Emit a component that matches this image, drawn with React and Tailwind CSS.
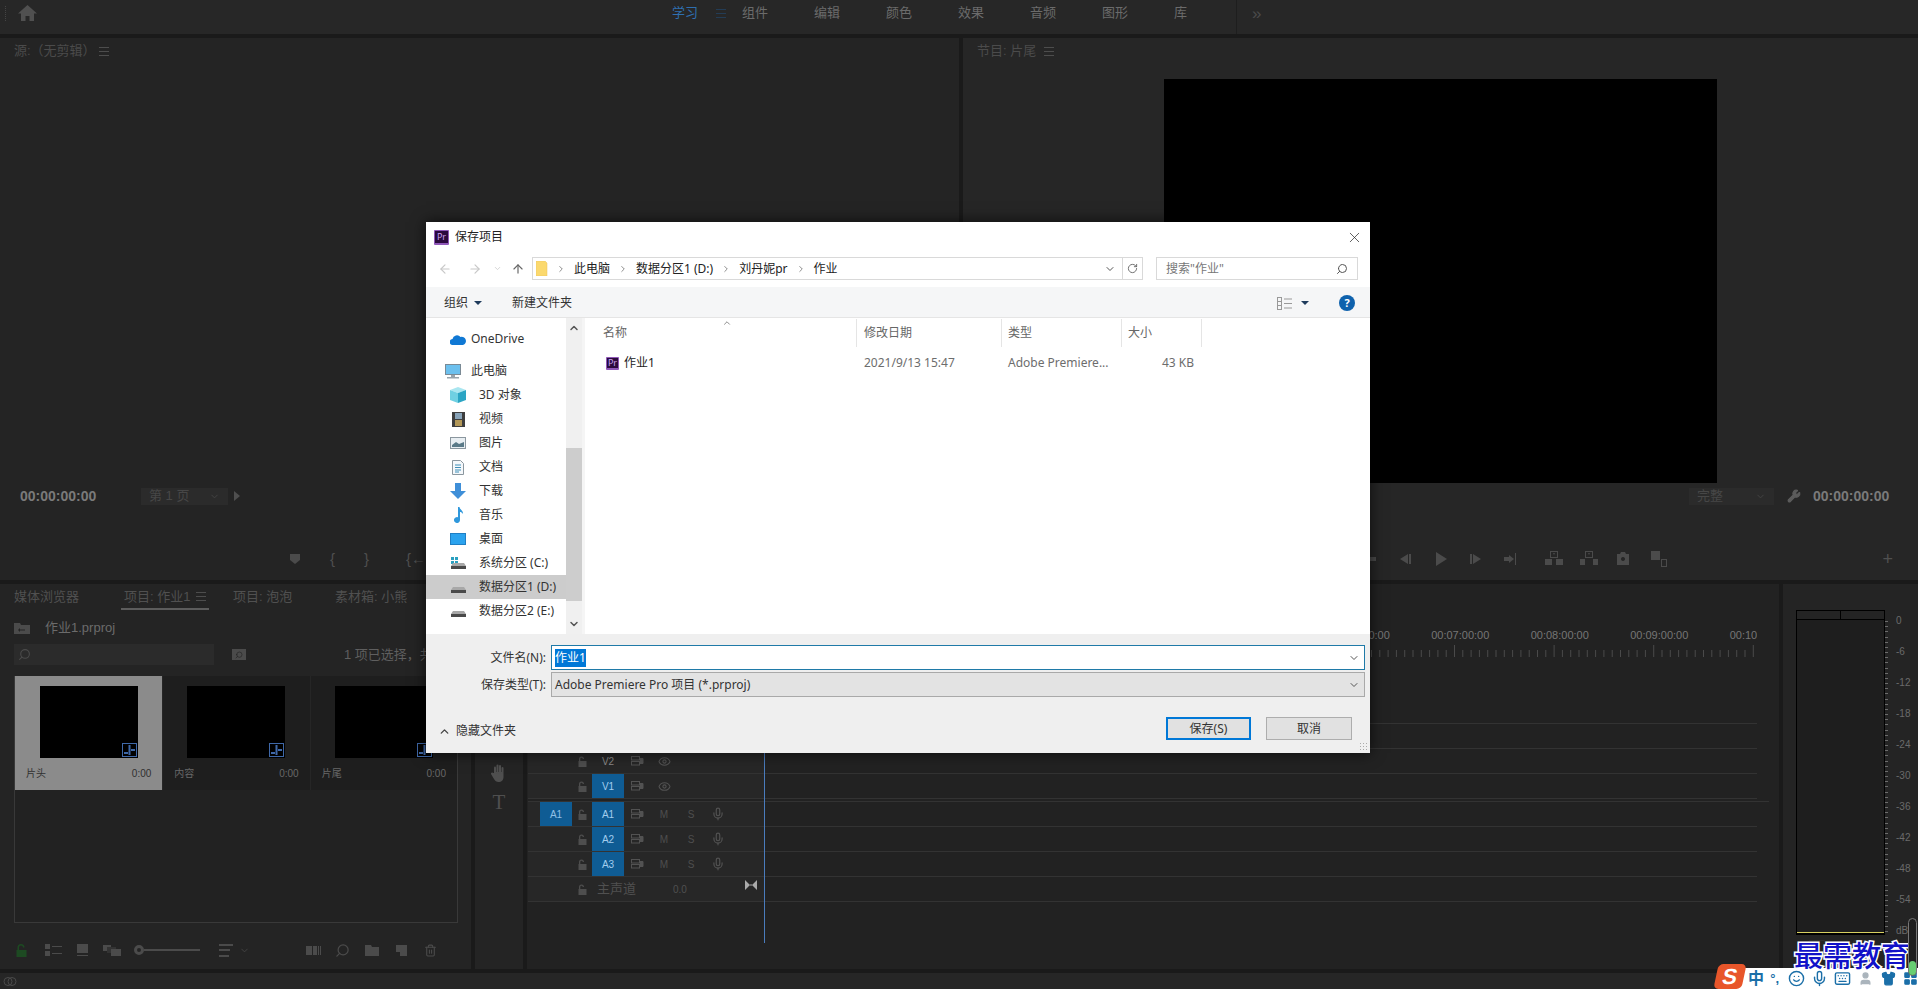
import {
  ArrowLeft,
  ArrowRight,
  ArrowUp,
  ChevronDown,
  ChevronRight,
  ChevronUp,
  Eye,
  Keyboard,
  LayoutGrid,
  Mic,
  RotateCw,
  Search,
  Shirt,
  Smile,
  Trash2,
  User,
  Wrench,
  X,
} from "lucide-react";

const G = "#4b4b4b";

function MenuIcon({ color = "#4d4d4d" }) {
  return (
    <svg width="10" height="9" viewBox="0 0 10 9" fill={color}>
      <rect y="0" width="10" height="1" />
      <rect y="4" width="10" height="1" />
      <rect y="8" width="10" height="1" />
    </svg>
  );
}

function Icon({ w = 16, h = 16, children, fill = G }) {
  return (
    <svg width={w} height={h} viewBox={`0 0 ${w} ${h}`} fill={fill} className="shrink-0">
      {children}
    </svg>
  );
}

function LockIcon() {
  return (
    <Icon w={9} h={11} fill="#4e4e4e">
      <path d="M1 5V3a2.5 2.5 0 0 1 5 0h-1.3a1.2 1.2 0 0 0-2.4 0v2H8.5v6H.5V5z" />
    </Icon>
  );
}

function SyncIcon() {
  return (
    <svg width="13" height="10" viewBox="0 0 13 10" fill="none" stroke="#525252">
      <rect x=".5" y=".5" width="8" height="3.5" />
      <rect x=".5" y="5.5" width="8" height="3.5" />
      <path d="M9 2.5h3v5H9" fill="#525252" />
    </svg>
  );
}

function PrBadge({ size = 15 }) {
  return (
    <div
      className="flex shrink-0 items-center justify-center rounded-[1px] border border-b-2 border-[#8f57b8] bg-[#2b0a3d] text-[9px] leading-none text-[#c9a2ee]"
      style={{ width: size, height: size }}
    >
      Pr
    </div>
  );
}

function Thumb({ name, selected }) {
  return (
    <div className={selected ? "h-[114px] w-[148px] bg-[#8b8b8b] pt-[10px]" : "h-[114px] w-[148px] border-l border-[#262626] bg-[#1e1e1e] pt-[10px]"}>
      <div className="relative mx-auto h-[72px] w-[98px] bg-black">
        <div className="absolute right-[1px] bottom-[1px] flex h-[14px] w-[15px] items-center justify-center border border-[#3f68a8]">
          <svg width="11" height="10" viewBox="0 0 11 10" fill="#3f68a8">
            <rect x="4.5" y="0" width="2" height="10" />
            <rect x="0" y="7" width="4" height="2" />
            <rect x="7" y="4" width="4" height="2" />
          </svg>
        </div>
      </div>
      <div className={selected ? "mt-2 flex items-center justify-between px-[11px] text-[10px] leading-4 text-[#303030]" : "mt-2 flex items-center justify-between px-[11px] text-[10px] leading-4 text-[#686868]"}>
        <span>{name}</span>
        <span>0:00</span>
      </div>
    </div>
  );
}

function ProjectPanel() {
  return (
    <div className="w-[471px] overflow-hidden bg-[#242424] text-[13px] text-[#505050]">
      <div className="flex h-[26px] items-center whitespace-nowrap pl-[14px]">
        <span className="w-[107px]">媒体浏览器</span>
        <div className="flex h-[26px] w-[88px] items-center gap-[6px] border-b-2 border-[#5c5c5c] pl-[3px] pt-[1px]">
          <span>项目: 作业1</span>
          <MenuIcon />
        </div>
        <span className="ml-[24px] w-[102px]">项目: 泡泡</span>
        <span>素材箱: 小熊</span>
      </div>
      <div className="mt-2 flex h-5 items-center pl-[14px]">
        <Icon w={16} h={11}>
          <path d="M0 0h6l1 2h9v9H0z" />
          <path d="M4 7l2-2v1.500h5v1H6V9z" fill="#242424" />
        </Icon>
        <span className="ml-[15px] text-[#6b6b6b]">作业1.prproj</span>
      </div>
      <div className="mt-[6px] flex h-[21px] items-center pl-[14px]">
        <div className="flex h-[21px] w-[200px] items-center bg-[#2b2b2b] pl-1">
          <Search size={13} color="#4b4b4b" className="-scale-x-100" />
        </div>
        <div className="ml-[18px] flex h-[11px] w-[14px] items-center justify-center bg-[#4b4b4b]">
          <Search size={8} color="#242424" className="-scale-x-100" />
        </div>
        <span className="ml-[98px] whitespace-nowrap text-[#5f5f5f]">1 项已选择，共 3 项</span>
      </div>
      <div className="mx-[14px] mt-[11px] h-[247px] w-[444px] border border-t-0 border-[#393939] bg-[#222]">
        <div className="flex">
          <Thumb name="片头" selected />
          <Thumb name="内容" />
          <Thumb name="片尾" />
        </div>
      </div>
      <div className="mt-[17px] flex h-5 items-center pl-[16px]">
        <Icon w={11} h={13} fill="#1d4a22">
          <path d="M1.5 6V3.5a3.5 3.5 0 0 1 7 0H7a2 2 0 0 0-4 0V6h7.5v7H.5V6z" />
        </Icon>
        <div className="ml-[18px]">
          <Icon w={17} h={12}>
            <rect width="5" height="5" />
            <rect y="7" width="5" height="5" />
            <rect x="7" y="2" width="10" height="1" />
            <rect x="7" y="9" width="10" height="1" />
          </Icon>
        </div>
        <div className="ml-[15px]">
          <Icon w={11} h={12}>
            <rect width="11" height="9" />
            <rect y="11" width="11" height="1" />
          </Icon>
        </div>
        <div className="ml-[15px]">
          <Icon w={18} h={11}>
            <rect width="8" height="6" />
            <rect x="4" y="2" width="9" height="6" fill="#333" />
            <rect x="8" y="4" width="10" height="7" />
          </Icon>
        </div>
        <div className="ml-[13px] h-[10px] w-[10px] rounded-full border-[3px] border-[#4b4b4b]" />
        <div className="h-[2px] w-[56px] bg-[#4b4b4b]" />
        <div className="ml-[19px]">
          <Icon w={14} h={13}>
            <rect width="14" height="2" />
            <rect y="5" width="11" height="2" />
            <rect y="11" width="10" height="2" />
          </Icon>
        </div>
        <ChevronDown size={11} color="#444" className="ml-[6px]" />
        <div className="ml-[56px]">
          <Icon w={15} h={9}>
            <rect width="6" height="9" />
            <rect x="7" width="4" height="9" />
            <rect x="12" width="1" height="9" />
            <rect x="14" width="1" height="9" />
          </Icon>
        </div>
        <Search size={15} color="#4b4b4b" className="ml-[14px] -scale-x-100" />
        <div className="ml-[15px]">
          <Icon w={14} h={11}>
            <path d="M0 0h6l1 2h7v9H0z" />
          </Icon>
        </div>
        <div className="ml-[17px]">
          <Icon w={11} h={11}>
            <path d="M0 0h11v11H4V7H0z" />
          </Icon>
        </div>
        <Trash2 size={13} color="#4b4b4b" className="ml-[17px]" />
      </div>
    </div>
  );
}

function Row({ label, on, patch, audio, eye }) {
  return (
    <div className="flex h-[25px] w-[1229px] border-b border-[#333]">
      <div className="flex w-[236px] items-center bg-[#272727] pl-[12px] text-[10px]">
        <div className={patch ? "flex h-[24px] w-[32px] items-center justify-center bg-[#0f5c94] text-[#8fc0e6]" : "w-[32px]"}>{patch ? "A1" : ""}</div>
        <div className="flex w-[20px] justify-center">
          <LockIcon />
        </div>
        <div className={on ? "flex h-[24px] w-[32px] items-center justify-center bg-[#0f5c94] text-[#a2cdee]" : "flex h-[24px] w-[32px] items-center justify-center text-[#8a8a8a]"}>{label}</div>
        <div className="flex w-[26px] justify-center">
          <SyncIcon />
        </div>
        {eye ? (
          <div className="flex w-[28px] justify-center">
            <Eye size={13} color="#525252" />
          </div>
        ) : null}
        {audio ? (
          <>
            <div className="w-[28px] text-center text-[#4e4e4e]">M</div>
            <div className="w-[26px] text-center text-[#4e4e4e]">S</div>
            <div className="flex w-[28px] justify-center">
              <Mic size={14} color="#525252" />
            </div>
          </>
        ) : null}
      </div>
    </div>
  );
}

function Ruler() {
  const ticks = [];
  for (let i = 0; i < 47; i++) {
    ticks.push(<rect key={i} x={i * 8.3} y={i % 12 === 10 ? 0 : 5} width="1" height={i % 12 === 10 ? 12 : 7} fill="#4a4a4a" />);
  }
  return (
    <div className="ml-px h-[30px] w-[1229px] overflow-hidden">
      <div className="flex pl-[783px] text-[11px] leading-[14px] text-[#767676]">
        {["00:06:00:00", "00:07:00:00", "00:08:00:00", "00:09:00:00", "00:10:00:00"].map((t) => (
          <span key={t} className="w-[99.5px] shrink-0 text-center">
            {t}
          </span>
        ))}
      </div>
      <svg width="386" height="14" className="ml-[843px] mt-[3px]">
        {ticks}
      </svg>
    </div>
  );
}

function TimelinePanel() {
  return (
    <div className="relative flex-1 bg-[#222] pt-[44px]">
      <Ruler />
      <div className="ml-px mt-[41px]">
        <Row label="V4" eye />
        <Row label="V3" eye />
        <Row label="V2" eye />
        <Row label="V1" on eye />
        <div className="h-[3px] w-[1241px] border-b border-[#333]" />
        <Row label="A1" on patch audio />
        <Row label="A2" on audio />
        <Row label="A3" on audio />
        <div className="flex h-[25px] w-[1229px] border-b border-[#333]">
          <div className="flex w-[236px] items-center bg-[#272727] pl-[50px] text-[#505050]">
            <LockIcon />
            <span className="ml-[10px] text-[13px]">主声道</span>
            <span className="ml-[37px] text-[10px]">0.0</span>
            <div className="ml-[58px] -mt-[8px]">
              <svg width="12" height="10" viewBox="0 0 12 10" fill="#aaa">
                <path d="M0 0l5 5-5 5zM12 0L7 5l5 5zM5 4.5h2v1H5z" />
              </svg>
            </div>
          </div>
        </div>
      </div>
      <div className="absolute top-[60px] left-[237px] h-[299px] w-px bg-[#4a7cbd]" />
    </div>
  );
}

function MeterPanel() {
  return (
    <div className="w-[135px] bg-[#242424] pl-[13px] pt-[26px]">
      <div className="flex h-[327px] items-start text-[10px] leading-3 text-[#6b6b6b]">
        <div className="flex h-[325px] w-[89px] flex-col border-x border-b-2 border-t border-black bg-[#1e1e1e]">
          <div className="flex h-[9px] border-b border-black bg-[#242424]">
            <div className="w-1/2 border-r border-black" />
          </div>
          <div className="mt-auto h-px bg-[#d8d060]" />
        </div>
        <div className="mt-[11px] h-[312px] w-[3px] bg-[repeating-linear-gradient(to_bottom,#6c6c6c_0,#6c6c6c_1px,transparent_1px,transparent_5.17px)]" />
        <div className="flex h-[327px] flex-col justify-between pl-[8px] pt-[5px]">
          {["0", "-6", "-12", "-18", "-24", "-30", "-36", "-42", "-48", "-54", "dB"].map((t) => (
            <span key={t}>{t}</span>
          ))}
        </div>
      </div>
      <div className="mt-[3px] flex gap-[27px] pl-[12px]">
        <div className="h-5 w-[18px] rounded-[2px] border border-[#303030]" />
        <div className="h-5 w-[18px] rounded-[2px] border border-[#303030]" />
      </div>
    </div>
  );
}

function TopBar() {
  return (
    <div className="flex h-[34px] items-center bg-[#272727] pb-[8px] text-[13px] text-[#6b6b6b]">
      <div className="ml-[5px] h-[15px] w-px border-l border-dotted border-[#444]" />
      <div className="ml-[12px]">
        <Icon w={19} h={16} fill="#505050">
          <path d="M9.5 0L19 8.500h-3V16h-4.500v-5h-4v5H3V8.500H0z" />
        </Icon>
      </div>
      <span className="ml-[635px] w-[44px] text-[#2f6fb0]">学习</span>
      <MenuIcon color="#233c55" />
      <div className="ml-[16px] flex">
        {["组件", "编辑", "颜色", "效果", "音频", "图形"].map((t) => (
          <span key={t} className="w-[72px]">
            {t}
          </span>
        ))}
        <span className="w-[62px]">库</span>
      </div>
      <div className="-mb-[8px] h-[34px] border-l border-[#1e1e1e]" />
      <span className="ml-[15px] text-[17px] leading-none text-[#4b4b4b]">»</span>
    </div>
  );
}

function SourcePanel() {
  return (
    <div className="flex w-[959px] flex-col bg-[#242424] pb-[11px] pl-[14px] pt-[5px] text-[13px] text-[#4b4b4b]">
      <div className="flex h-4 items-center gap-[3px]">
        <span>源:（无剪辑）</span>
        <MenuIcon />
      </div>
      <div className="mt-auto flex h-5 items-center pl-[6px]">
        <span className="w-[121px] text-[14px] font-bold text-[#7a7a7a]">00:00:00:00</span>
        <div className="flex h-[17px] w-[87px] items-center justify-between bg-[#2b2b2b] px-2 text-[#474747]">
          <span>第 1 页</span>
          <ChevronDown size={11} color="#444" />
        </div>
        <div className="ml-[6px] h-0 w-0 border-y-[5px] border-l-[6px] border-y-transparent border-l-[#4f4f4f]" />
      </div>
      <div className="mt-[43px] flex h-5 items-center pl-[276px] text-[15px] text-[#4f4f4f]">
        <Icon w={10} h={10}>
          <path d="M0 0h10v6L5 10 0 6z" />
        </Icon>
        <span className="ml-[30px] w-[34px]">{"{"}</span>
        <span className="w-[42px]">{"}"}</span>
        <span>{"{←"}</span>
      </div>
    </div>
  );
}

function ProgramPanel() {
  const ctl = [
    <path key="a" d="M12 5H6V3L1 7l5 4V9h6z" />,
    <path key="b" d="M1 7l8-5v10zM10 2h2v10h-2z" />,
    <path key="c" d="M2 0l11 7-11 7z" />,
    <path key="d" d="M1 2h2v10H1zM4 2l8 5-8 5z" />,
    <path key="e" d="M0 5h5V3l5 4-5 4V9H0zM11 1h1v12h-1z" />,
  ];
  const ctl2 = [
    <path key="f" fillRule="evenodd" d="M5 0h8v7H5zM6 1v5h6V1zM0 8h7v6H0zM11 8h7v6h-7zM8 2h2l-1 2z" />,
    <path key="g" fillRule="evenodd" d="M5 0h8v7H5zM6 1v5h6V1zM0 8h5v6H0zM13 8h5v6h-5zM8 2h2l-1 2z" />,
    <path key="h" fillRule="evenodd" d="M2 3h3l1-2h4l1 2h3v11H2zM8 6a2 2 0 1 0 .01 0z" />,
    <path key="i" fillRule="evenodd" d="M1 0h9v9H1zM11 8h6v8h-6zM12 9v6h4V9z" />,
  ];
  return (
    <div className="flex flex-1 flex-col bg-[#262626] pb-[11px] pt-[5px] text-[13px] text-[#4b4b4b]">
      <div className="flex h-4 items-center gap-[8px] pl-[14px]">
        <span>节目: 片尾</span>
        <MenuIcon />
      </div>
      <div className="ml-[201px] mt-5 h-[404px] w-[553px] bg-black" />
      <div className="mt-auto flex h-5 items-center justify-end pr-[30px]">
        <div className="flex h-[17px] w-[85px] items-center justify-between bg-[#2b2b2b] px-2 text-[#474747]">
          <span>完整</span>
          <ChevronDown size={11} color="#444" />
        </div>
        <Wrench size={14} color="#5c5c5c" fill="#5c5c5c" className="ml-[13px]" />
        <span className="ml-[12px] w-[75px] text-[14px] font-bold text-[#7a7a7a]">00:00:00:00</span>
      </div>
      <div className="mt-[43px] flex h-5 items-center pl-[390px]">
        {ctl.map((p) => (
          <div key={p.key} className="flex w-[35px] justify-center">
            <Icon w={14} h={14}>{p}</Icon>
          </div>
        ))}
        <div className="ml-[8px] flex">
          {ctl2.map((p) => (
            <div key={p.key} className="flex w-[35px] justify-center">
              <Icon w={18} h={16}>{p}</Icon>
            </div>
          ))}
        </div>
        <span className="ml-auto mr-[25px] text-[18px] leading-none text-[#505050]">+</span>
      </div>
    </div>
  );
}

function NavIcon({ kind }) {
  if (kind === "cloud")
    return (
      <Icon w={16} h={11} fill="#0f78d4">
        <path d="M3 11a3 3 0 0 1-.5-6A4.500 4.500 0 0 1 10.500 3 3.500 3.500 0 0 1 13 11z" />
      </Icon>
    );
  if (kind === "pc")
    return (
      <svg width="16" height="15" viewBox="0 0 16 15" className="shrink-0">
        <rect x=".5" y=".5" width="15" height="10" fill="#6cc0ee" stroke="#7a8a95" />
        <rect x="6" y="11" width="4" height="2" fill="#98a4ac" />
        <rect x="2" y="13" width="12" height="1.500" fill="#98a4ac" />
      </svg>
    );
  if (kind === "cube")
    return (
      <svg width="16" height="16" viewBox="0 0 16 16" className="shrink-0">
        <path d="M8 0l8 3-8 3-8-3z" fill="#a9e6f0" />
        <path d="M0 3l8 3v10l-8-3z" fill="#6fd0e2" />
        <path d="M16 3l-8 3v10l8-3z" fill="#2ba5c4" />
      </svg>
    );
  if (kind === "film")
    return (
      <svg width="13" height="15" viewBox="0 0 13 15" className="shrink-0">
        <rect width="13" height="15" fill="#3e3e3e" />
        <rect x="3" y="1" width="7" height="6" fill="#88a3b8" />
        <rect x="3" y="8" width="7" height="6" fill="#b39858" />
      </svg>
    );
  if (kind === "pic")
    return (
      <svg width="16" height="12" viewBox="0 0 16 12" className="shrink-0">
        <rect x=".5" y=".5" width="15" height="11" fill="#e8eef2" stroke="#8b979f" />
        <path d="M2 8l4-3 3 2 5-2v5H2z" fill="#5a7a88" />
      </svg>
    );
  if (kind === "doc")
    return (
      <svg width="12" height="15" viewBox="0 0 12 15" className="shrink-0">
        <path d="M.5.5h8l3 3v11H.5z" fill="#f5f8fb" stroke="#8b979f" />
        <path d="M3 5h6M3 7.500h6M3 10h6M3 12h4" stroke="#3f8fb8" />
      </svg>
    );
  if (kind === "down")
    return (
      <Icon w={16} h={16} fill="#3f8fd8">
        <path d="M5 0h6v8h5l-8 8-8-8h5z" />
      </Icon>
    );
  if (kind === "note")
    return (
      <Icon w={12} h={16} fill="#2f98dc">
        <path d="M6 0h1.500c.5 3 4 3.500 3.500 7-1-1.500-2-2-3-2v8a3 3 0 1 1-2-2.800z" />
      </Icon>
    );
  if (kind === "desk")
    return (
      <svg width="16" height="12" viewBox="0 0 16 12" className="shrink-0">
        <rect x=".5" y=".5" width="15" height="11" fill="#2ba3ee" stroke="#1f7fc4" />
      </svg>
    );
  return (
    <svg width="15" height="12" viewBox="0 0 15 12" className="shrink-0">
      {kind === "win" ? <path d="M0 0h3v3H0zM4 0h3v3H4zM0 4h3v3H0zM4 4h3v3H4z" fill="#2aa0c0" /> : null}
      <path d="M2 6h11l2 3v3H0V9z" fill="#a8a8a8" />
      <rect y="9" width="15" height="3" fill="#4a4a4a" />
    </svg>
  );
}

const places = [
  ["pc", "此电脑", 0],
  ["cube", "3D 对象", 1],
  ["film", "视频", 1],
  ["pic", "图片", 1],
  ["doc", "文档", 1],
  ["down", "下载", 1],
  ["note", "音乐", 1],
  ["desk", "桌面", 1],
  ["win", "系统分区 (C:)", 1],
  ["drive", "数据分区1 (D:)", 1, true],
  ["drive", "数据分区2 (E:)", 1],
];

function SaveDialog() {
  const crumbs = ["此电脑", "数据分区1 (D:)", "刘丹妮pr", "作业"];
  return (
    <div className="absolute left-[426px] top-[222px] z-10 h-[531px] w-[944px] bg-white text-[12px] text-[#333] shadow-[0_0_14px_rgba(0,0,0,0.7)] font-['Noto_Sans','Noto_Sans_CJK_SC',sans-serif]">
      <div className="flex h-7 items-center pl-2 pr-[7px] pt-[2px]">
        <PrBadge />
        <span className="ml-[6px] text-[#222]">保存项目</span>
        <X size={17} strokeWidth={1} color="#222" className="ml-auto" />
      </div>
      <div className="flex h-[37px] pb-[7px] pt-[7px]">
        <div className="flex w-[106px] items-center pl-[12px]">
          <ArrowLeft size={14} color="#c8c8c8" />
          <ArrowRight size={14} color="#c8c8c8" className="ml-[16px]" />
          <ChevronDown size={9} color="#c8c8c8" className="ml-[11px]" />
          <ArrowUp size={14} color="#666" className="ml-[9px]" />
        </div>
        <div className="flex w-[611px] items-center border border-[#d9d9d9]">
          <svg width="12" height="15" viewBox="0 0 12 15" className="ml-[3px] shrink-0">
            <path d="M0 0h9l2 2v13H0z" fill="#fbd96e" stroke="#e8c35c" strokeWidth=".5" />
          </svg>
          {crumbs.map((c) => (
            <div key={c} className="flex items-center">
              <ChevronRight size={10} color="#777" className="mx-[8px]" />
              <span className="whitespace-nowrap text-[#222]">{c}</span>
            </div>
          ))}
          <ChevronDown size={12} color="#555" className="ml-auto mr-[6px]" />
          <div className="flex h-full w-[20px] items-center justify-center border-l border-[#d9d9d9]">
            <RotateCw size={11} color="#666" />
          </div>
        </div>
        <div className="ml-[13px] flex w-[202px] items-center justify-between border border-[#d9d9d9] px-[9px] text-[#777]">
          <span>搜索"作业"</span>
          <Search size={12} color="#555" className="-scale-x-100" />
        </div>
      </div>
      <div className="flex h-[31px] items-center border-b border-[#e5e5e5] bg-[#f5f6f7] pl-[18px] pr-[15px] pt-[2px]">
        <span>组织</span>
        <div className="ml-[6px] h-0 w-0 border-x-[4px] border-t-[4px] border-x-transparent border-t-[#1e3b5c]" />
        <span className="ml-[30px]">新建文件夹</span>
        <svg width="15" height="13" viewBox="0 0 15 13" fill="none" stroke="#999" className="ml-auto">
          <rect x=".5" y=".5" width="4" height="12" />
          <path d="M0 4.500h4M0 8.500h4M7 2h8M7 6.500h8M7 11h8" />
        </svg>
        <div className="ml-[9px] h-0 w-0 border-x-[4px] border-t-[4px] border-x-transparent border-t-[#1e3b5c]" />
        <div className="ml-[30px] flex h-4 w-4 items-center justify-center rounded-full bg-[#0f62ad] text-[11px] font-bold text-white">?</div>
      </div>
      <div className="flex h-[316px]">
        <div className="w-[140px] pt-[9px]">
          <div className="flex h-6 items-center pl-[24px]">
            <NavIcon kind="cloud" />
            <span className="ml-[5px]">OneDrive</span>
          </div>
          <div className="mt-2">
            {places.map(([kind, name, sub, sel]) => (
              <div key={name} className={sel ? "flex h-6 items-center bg-[#ccc]" : "flex h-6 items-center"}>
                <div className={sub ? "flex w-[53px] justify-center pl-[11px]" : "flex w-[45px] justify-center pl-[8px]"}>
                  <NavIcon kind={kind} />
                </div>
                <span className="whitespace-nowrap">{name}</span>
              </div>
            ))}
          </div>
        </div>
        <div className="flex w-4 flex-col items-center bg-[#f0f0f0] py-1">
          <ChevronUp size={12} strokeWidth={3} color="#555" />
          <div className="mt-[114px] h-[153px] w-full bg-[#cdcdcd]" />
          <ChevronDown size={12} strokeWidth={3} color="#555" className="mt-auto" />
        </div>
        <div className="w-[3px] bg-[#f5f5f5]" />
        <div className="relative flex-1 pt-px">
          <ChevronUp size={10} color="#777" className="absolute left-[137px] top-0" />
          <div className="flex h-7 text-[#666]">
            <div className="flex w-[272px] items-center border-r border-[#e5e5e5] pl-[18px]">名称</div>
            <div className="flex w-[145px] items-center border-r border-[#e5e5e5] pl-[7px]">修改日期</div>
            <div className="flex w-[120px] items-center border-r border-[#e5e5e5] pl-[6px]">类型</div>
            <div className="flex w-[80px] items-center border-r border-[#e5e5e5] pl-[6px]">大小</div>
          </div>
          <div className="mt-1 flex h-6 items-center text-[#6d6d6d]">
            <div className="flex w-[272px] items-center pl-[21px] text-[#222]">
              <PrBadge size={13} />
              <span className="ml-[5px]">作业1</span>
            </div>
            <div className="w-[145px] pl-[7px]">2021/9/13 15:47</div>
            <div className="w-[120px] pl-[6px]">Adobe Premiere...</div>
            <div className="w-[72px] text-right">43 KB</div>
          </div>
        </div>
      </div>
      <div className="relative h-[119px] bg-[#efefef] pt-[11px]">
        <div className="flex h-[25px] items-center">
          <span className="w-[120px] text-right">文件名(N):</span>
          <div className="ml-[5px] flex h-[25px] w-[814px] items-center border border-[#1f7aa8] bg-white pl-[3px] pr-[4px]">
            <span className="bg-[#0078d7] text-white">作业1</span>
            <ChevronDown size={12} color="#555" className="ml-auto" />
          </div>
        </div>
        <div className="mt-[2px] flex h-[25px] items-center">
          <span className="w-[120px] text-right">保存类型(T):</span>
          <div className="ml-[5px] flex h-[25px] w-[814px] items-center border border-[#a9a9a9] bg-[#e3e3e3] pl-[3px] pr-[4px]">
            <span>Adobe Premiere Pro 项目 (*.prproj)</span>
            <ChevronDown size={12} color="#555" className="ml-auto" />
          </div>
        </div>
        <div className="mt-[20px] flex h-[23px] items-center pl-[12px] pr-[18px]">
          <ChevronUp size={13} strokeWidth={2.5} color="#444" className="mt-[5px]" />
          <span className="ml-[5px] mt-[5px]">隐藏文件夹</span>
          <div className="ml-auto flex h-[23px] w-[85px] items-center justify-center border-2 border-[#0078d7] bg-[#e1e1e1]">保存(S)</div>
          <div className="ml-[15px] flex h-[23px] w-[86px] items-center justify-center border border-[#adadad] bg-[#e1e1e1]">取消</div>
        </div>
        <div className="absolute bottom-[2px] right-[2px] h-[9px] w-[9px] bg-[radial-gradient(#aaa_1px,transparent_1px)] bg-[length:3px_3px]" />
      </div>
    </div>
  );
}

function SogouBar() {
  return (
    <>
      <div className="absolute bottom-0 right-0 z-20 flex h-[21px] w-[188px] items-center bg-white pl-[18px] text-[#1b6fa8]">
        <span className="w-[24px] text-[16px] font-bold leading-none">中</span>
        <span className="w-[19px] text-[13px] font-bold leading-none">°,</span>
        <Smile size={17} className="shrink-0" />
        <Mic size={17} className="ml-[6px] shrink-0" />
        <Keyboard size={17} className="ml-[6px] shrink-0" />
        <User size={15} color="#aab4bc" fill="#aab4bc" className="ml-[7px] shrink-0" />
        <Shirt size={15} fill="#1b6fa8" className="ml-[8px] shrink-0" />
        <LayoutGrid size={15} fill="#1b6fa8" className="ml-[7px] shrink-0" />
      </div>
      <div className="absolute bottom-0 right-[174px] z-20 flex h-[25px] w-[28px] -skew-x-12 items-center justify-center rounded-[5px] bg-[#e8562a] text-[22px] font-black leading-none text-white">
        S
      </div>
      <div className="absolute right-[8px] top-[941px] z-20 text-[29px] font-medium leading-[32px] text-[#1212c8] [-webkit-text-stroke:3px_white] [paint-order:stroke_fill]">
        最需教育
      </div>
      <div className="absolute bottom-[13px] right-px z-20 h-[58px] w-[9px] rounded-full border border-[#777] bg-[#1e1e1e]">
        <div className="absolute bottom-0 h-[14px] w-full rounded-full bg-[#67cf72]" />
      </div>
    </>
  );
}

export default function App() {
  return (
    <div className="relative flex h-[989px] w-[1918px] flex-col gap-[4px] overflow-hidden bg-[#1a1a1a] font-['Liberation_Sans','Noto_Sans_CJK_SC',sans-serif]">
      <TopBar />
      <div className="flex h-[542px] gap-[4px]">
        <SourcePanel />
        <ProgramPanel />
      </div>
      <div className="-mb-[2px] flex h-[385px] gap-[4px]">
        <ProjectPanel />
        <div className="flex w-[48px] flex-col items-center bg-[#242424] pt-[180px] text-[#4f4f4f]">
          <svg width="16" height="18" viewBox="0 0 16 18" fill="#4f4f4f">
            <path d="M3 9V3.500a1 1 0 0 1 2 0V8h.5V1.500a1 1 0 0 1 2 0V8H8V2a1 1 0 0 1 2 0v6h.5V4a1 1 0 0 1 2 0v9c0 3-2 5-5 5-2 0-3.500-1-4.500-3L0 10c-.5-1 1-2 2-1z" />
          </svg>
          <span className="mt-[8px] text-[21px] leading-[24px] font-['Liberation_Serif',serif]">T</span>
        </div>
        <TimelinePanel />
        <MeterPanel />
      </div>
      <div className="mt-[2px] flex h-[14px] flex-1 items-center bg-[#262626] pl-[3px]">
        <svg width="14" height="13" viewBox="0 0 14 13" fill="none" stroke="#4a4a4a">
          <circle cx="5" cy="6.500" r="4" />
          <circle cx="9" cy="6.500" r="4" />
        </svg>
      </div>
      <SaveDialog />
      <SogouBar />
    </div>
  );
}
